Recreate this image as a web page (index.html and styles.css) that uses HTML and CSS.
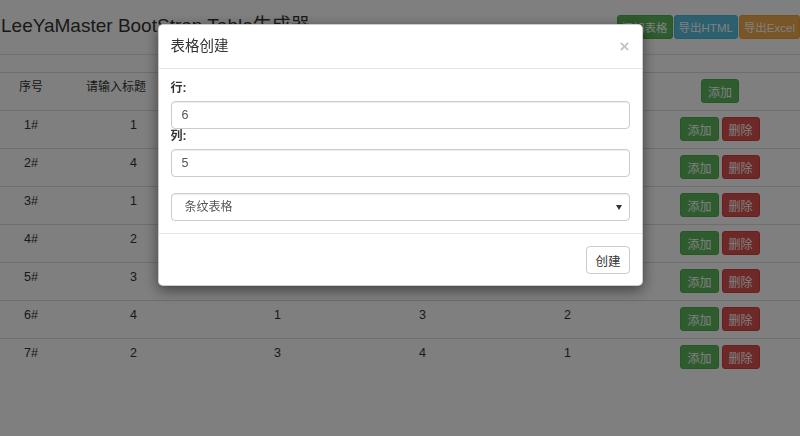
FILE: index.html
```html
<!DOCTYPE html>
<html lang="zh-CN">
<head>
    <meta charset="UTF-8">
    <meta name="viewport" content="width=device-width, initial-scale=1.0">
    <title>LeeYaMaster BootStrap Table生成器</title>
    <link rel="stylesheet" href="styles.css">
</head>
<body>
    <div class="page">
        <div class="toolbar">
            <h1>LeeYaMaster BootStrap Table生成器</h1>
            <div class="toolbar-btns">
                <button class="btn btn-success">添加表格</button>
                <button class="btn btn-info">导出HTML</button>
                <button class="btn btn-warning">导出Excel</button>
            </div>
        </div>

        <table class="data-table">
            <colgroup>
                <col class="c-no">
                <col class="c-title">
                <col class="c-val">
                <col class="c-val">
                <col class="c-val">
                <col>
            </colgroup>
            <thead>
                <tr>
                    <th class="col-no">序号</th>
                    <th class="col-title">请输入标题</th>
                    <th class="col-title">请输入标题</th>
                    <th class="col-title">请输入标题</th>
                    <th class="col-title">请输入标题</th>
                    <th><div class="ops"><button class="btn btn-sm btn-success">添加</button></div></th>
                </tr>
            </thead>
            <tbody>
                <tr>
                    <td>1#</td><td>1</td><td>2</td><td>3</td><td>4</td>
                    <td><div class="ops"><button class="btn btn-sm btn-success">添加</button><button class="btn btn-sm btn-danger">删除</button></div></td>
                </tr>
                <tr>
                    <td>2#</td><td>4</td><td>3</td><td>2</td><td>1</td>
                    <td><div class="ops"><button class="btn btn-sm btn-success">添加</button><button class="btn btn-sm btn-danger">删除</button></div></td>
                </tr>
                <tr>
                    <td>3#</td><td>1</td><td>2</td><td>4</td><td>3</td>
                    <td><div class="ops"><button class="btn btn-sm btn-success">添加</button><button class="btn btn-sm btn-danger">删除</button></div></td>
                </tr>
                <tr>
                    <td>4#</td><td>2</td><td>1</td><td>3</td><td>4</td>
                    <td><div class="ops"><button class="btn btn-sm btn-success">添加</button><button class="btn btn-sm btn-danger">删除</button></div></td>
                </tr>
                <tr>
                    <td>5#</td><td>3</td><td>4</td><td>1</td><td>2</td>
                    <td><div class="ops"><button class="btn btn-sm btn-success">添加</button><button class="btn btn-sm btn-danger">删除</button></div></td>
                </tr>
                <tr>
                    <td>6#</td><td>4</td><td>1</td><td>3</td><td>2</td>
                    <td><div class="ops"><button class="btn btn-sm btn-success">添加</button><button class="btn btn-sm btn-danger">删除</button></div></td>
                </tr>
                <tr>
                    <td>7#</td><td>2</td><td>3</td><td>4</td><td>1</td>
                    <td><div class="ops"><button class="btn btn-sm btn-success">添加</button><button class="btn btn-sm btn-danger">删除</button></div></td>
                </tr>
            </tbody>
        </table>
    </div>

    <!-- create table dialog -->
    <div class="modal-backdrop"></div>
    <div class="modal">
        <div class="modal-dialog">
            <div class="modal-header">
                <h4 class="modal-title">表格创建</h4>
                <button class="close">&times;</button>
            </div>
            <div class="modal-body">
                <label for="rows">行:</label>
                <input type="text" id="rows" class="form-control" value="6">
                <label for="cols">列:</label>
                <input type="text" id="cols" class="form-control" value="5">
                <div class="select-wrap">
                    <select id="tableType" class="form-control">
                        <option>条纹表格</option>
                        <option>边框表格</option>
                        <option>悬停表格</option>
                    </select>
                </div>
            </div>
            <div class="modal-footer">
                <button class="btn btn-default">创建</button>
            </div>
        </div>
    </div>
</body>
</html>
```

FILE: styles.css
```css
html, body {
    overflow: hidden;
}
body {
    font-family: "Liberation Sans", "Noto Sans CJK SC", sans-serif;
    font-size: 12px;
    color: #333;
    margin: 0;
    background-color: #fff;
}
.page {
    width: 800px;
}
.toolbar {
    display: flex;
    justify-content: space-between;
    align-items: flex-start;
    height: 54px;
    border-bottom: 1px solid #e4e4e4;
}
.toolbar h1 {
    margin: 15px 0 0 1px;
    font-size: 19px;
    font-weight: normal;
    line-height: 22px;
}
.toolbar-btns {
    display: flex;
    gap: 1px;
    margin-top: 15px;
}
.btn {
    font-family: inherit;
    font-size: 11.5px;
    color: #fff;
    height: 24px;
    padding: 0 4px;
    border: 1px solid transparent;
    border-radius: 3px;
    cursor: pointer;
}
.btn-sm {
    font-size: 12px;
    padding: 0 6px;
}
.btn-success {
    background-color: #5cb85c;
    border-color: #4cae4c;
}
.btn-info {
    background-color: #5bc0de;
    border-color: #46b8da;
}
.btn-warning {
    background-color: #f0ad4e;
    border-color: #eea236;
}
.btn-danger {
    background-color: #d9534f;
    border-color: #d43f3a;
}
.btn-default {
    background-color: #fff;
    border-color: #ccc;
    color: #333;
    font-size: 12.5px;
    height: 28px;
    padding: 0 8px;
    border-radius: 4px;
}

.data-table {
    width: 800px;
    margin-top: 17px;
    border-collapse: collapse;
    table-layout: fixed;
    text-align: center;
    font-size: 12.5px;
}
.data-table .c-no { width: 62px; }
.data-table .c-title { width: 143px; }
.data-table .c-val { width: 145px; }
.data-table th,
.data-table td {
    padding: 6px 4px 7px;
    line-height: 17px;
    vertical-align: top;
    border-top: 1px solid #ddd;
}
.data-table th {
    font-weight: normal;
    font-size: 12px;
    border-bottom: 1px solid #ddd;
}
.data-table th.col-title {
    text-align: left;
    padding-left: 24px;
}
.data-table tbody tr:first-child td {
    border-top: none;
}
.ops {
    display: flex;
    justify-content: center;
    gap: 3px;
}

.modal-backdrop {
    position: fixed;
    top: 0;
    left: 0;
    right: 0;
    bottom: 0;
    background-color: rgba(0, 0, 0, 0.5);
}
.modal {
    position: fixed;
    top: 0;
    left: 0;
    right: 0;
    bottom: 0;
}
.modal-dialog {
    width: 485px;
    margin: 24px auto 0;
    background-color: #fff;
    border: 1px solid rgba(0, 0, 0, 0.2);
    border-radius: 5px;
    box-shadow: 0 4px 14px rgba(0, 0, 0, 0.5);
    box-sizing: border-box;
}
.modal-header {
    display: flex;
    justify-content: space-between;
    align-items: center;
    padding: 11px 12px 12px;
    border-bottom: 1px solid #e5e5e5;
}
.modal-title {
    margin: 0;
    font-size: 14.5px;
    font-weight: normal;
    line-height: 20px;
}
.close {
    border: none;
    background: none;
    padding: 0;
    font-family: inherit;
    font-size: 17px;
    font-weight: bold;
    line-height: 1;
    color: #c4c4c4;
    cursor: pointer;
}
.modal-body {
    padding: 12px 12px;
}
.modal-body label {
    display: block;
    font-weight: bold;
    font-size: 12px;
    line-height: 15px;
    margin-bottom: 5px;
}
.form-control {
    display: block;
    width: 100%;
    height: 28px;
    padding: 0 10px;
    font-family: inherit;
    font-size: 12.5px;
    color: #555;
    background-color: #fff;
    border: 1px solid #ccc;
    border-radius: 4px;
    box-shadow: inset 0 1px 1px rgba(0, 0, 0, 0.075);
    box-sizing: border-box;
}
.select-wrap {
    position: relative;
    margin-top: 16px;
}
.select-wrap select {
    appearance: none;
    -webkit-appearance: none;
    padding-left: 13px;
    font-size: 12px;
}
.select-wrap::after {
    content: "";
    position: absolute;
    right: 8px;
    top: 12px;
    border-left: 3px solid transparent;
    border-right: 3px solid transparent;
    border-top: 5px solid #333;
    pointer-events: none;
}
.modal-footer {
    display: flex;
    justify-content: flex-end;
    padding: 12px 12px 11px;
    border-top: 1px solid #e5e5e5;
}
```
